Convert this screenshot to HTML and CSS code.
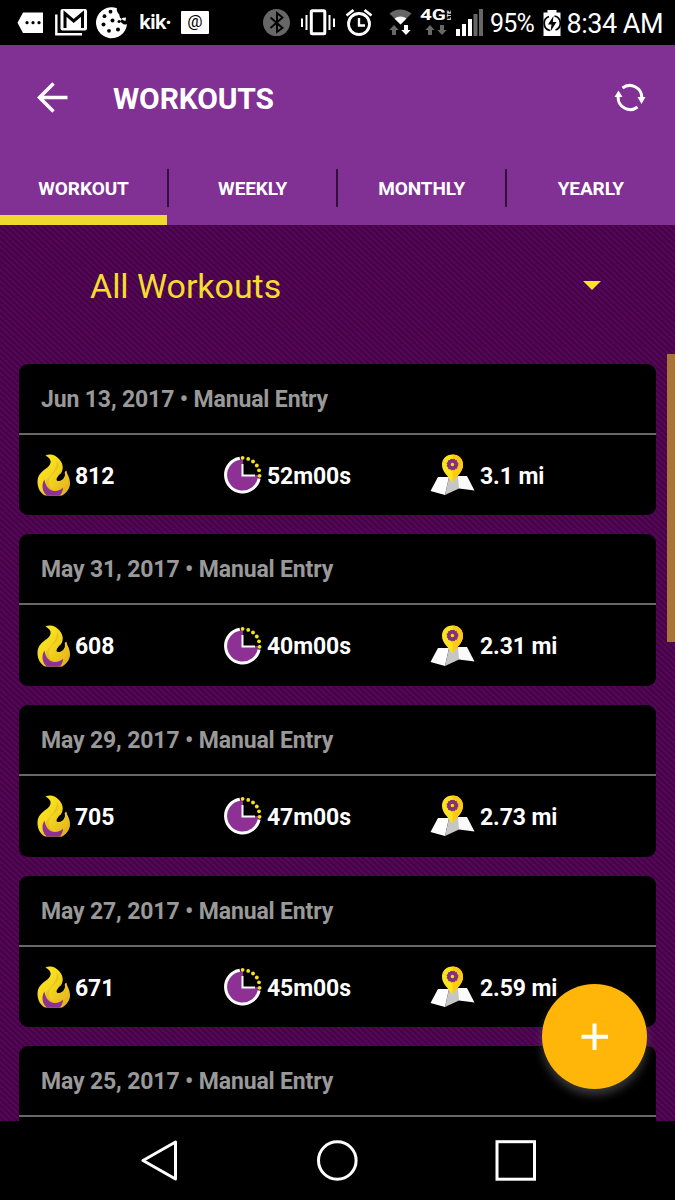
FILE: index.html
```html
<!DOCTYPE html>
<html lang="en">
<head>
    <meta charset="UTF-8">
    <meta name="viewport" content="width=device-width, initial-scale=1.0">
    <title>Workouts</title>
    <link rel="stylesheet" href="styles.css">
</head>
<body>
    <!-- shared icons -->
    <svg class="symbols" width="0" height="0">
        <defs>
            <linearGradient id="flameFill" x1="0" y1="0" x2="1" y2="1">
                <stop offset="0" stop-color="#fff01c"/>
                <stop offset="0.5" stop-color="#f3d420"/>
                <stop offset="1" stop-color="#e2ad1c"/>
            </linearGradient>
        </defs>
        <symbol id="flame" viewBox="0 0 34 42">
            <path d="M8.500 1.500C13 -1 19 1 22.500 5.500C27 11 26.500 16 23 20.500C20.500 23.500 19 25.500 20.500 26.500C24 27.500 28.500 24.500 27.500 19C27.500 18 28.500 17 29.500 16.500C29.500 20 33 23 33 29C33 35 29 39 25 41.500H8C3 39 .5 33.500 .5 28C.5 21 4.500 18 9 14.500C15 10 15.500 5 8.500 1.500Z" fill="url(#flameFill)"/>
            <path d="M20 7C23.500 12 20.500 16 15.500 20C10 25 11 33 16 36C21 38 29 36 32.500 27C33.500 34 29 39.500 25 41.500H12L7.500 30C10 23 20 18 20 7Z" fill="#e3b41c" opacity=".6"/>
            <path d="M22.500 20.500C20 23.500 18.500 26 20.500 26.800C24.500 27.500 28.500 24 27.800 18.500C25.500 18.500 24 20 22.500 20.500Z" fill="#000"/>
            <path d="M7.500 25.500C8 31 11.500 36 16 36.800C20 37.500 24 36 26 33.500C26 37 24.500 40 22.500 41.600H10C6.500 39 5.500 35 5.500 32C5.500 29 6.500 27 7.500 25.500Z" fill="#8d3294"/>
        </symbol>
        <symbol id="clock" viewBox="0 0 38 40">
            <circle cx="18.500" cy="20" r="16" fill="#8d3294"/>
            <path d="M19 20V1H38V20Z" fill="#000"/>
            <path d="M15.800 3.200A17 17 0 1 0 35.200 23.500" fill="none" stroke="#fff" stroke-width="3"/>
            <path d="M18.500 9V20.500H31" fill="none" stroke="#fff" stroke-width="2"/>
            <g fill="#f8e323">
                <circle cx="18.600" cy="2.800" r="1.900"/>
                <circle cx="24.200" cy="3.900" r="1.900"/>
                <circle cx="29" cy="6.500" r="1.900"/>
                <circle cx="32.800" cy="10.500" r="1.900"/>
                <circle cx="35" cy="15.300" r="1.900"/>
                <circle cx="35.600" cy="20.800" r="1.900"/>
            </g>
        </symbol>
        <symbol id="map" viewBox="0 0 46 42">
            <path d="M8 23H19L15 41L.5 37Z" fill="#fff"/>
            <path d="M19 23L29 22V34.500L15 41Z" fill="#c6c6c6"/>
            <path d="M28 22H37L44.500 36.500L29 34.500Z" fill="#fafafa"/>
            <path d="M22.500 .5C16 .5 12 5 12 11C12 18 18.500 22 22.500 28.500C26.500 22 33 18 33 11C33 5 29 .5 22.500 .5Z" fill="#fbe41f"/>
            <path d="M22.500 .5C29 .5 33 5 33 11C33 18 26.500 22 22.500 28.500Z" fill="#fbc916"/>
            <circle cx="22.500" cy="10.500" r="3.600" fill="none" stroke="#85307e" stroke-width="3.600"/>
            <circle cx="22.500" cy="10.500" r="5.300" fill="none" stroke="#85307e" stroke-width="1.200" stroke-dasharray="1.600 1.170"/>
        </symbol>
    </svg>

    <div class="status-bar">
        <div class="notifications">
            <svg width="26" height="45" viewBox="17 0 26 45">
                <path d="M23 12.500H43V33H23L17.500 22.700Z" fill="#fff"/>
                <circle cx="27" cy="22.700" r="1.600"/><circle cx="33" cy="22.700" r="1.600"/><circle cx="39" cy="22.700" r="1.600"/>
            </svg>
            <svg width="32" height="45" viewBox="55 0 32 45">
                <path d="M56.300 14.500V34.300H82" fill="none" stroke="#fff" stroke-width="2.400"/>
                <rect x="60.500" y="9" width="26.500" height="21.500" rx="2" fill="#fff"/>
                <path d="M65 28V13.500L73.700 21L82.500 13.500V28" fill="none" stroke="#000" stroke-width="3"/>
            </svg>
            <svg width="32" height="45" viewBox="96 0 32 45">
                <path d="M117 8.200A15.500 15.500 0 1 0 127 24Q124 25.500 122 23L120 21.500L122 19Q119 18 119.500 15Q116 12 117 8.200Z" fill="#fff"/>
                <path d="M122 18L126 17.500L125.500 21L122.500 20Z" fill="#fff"/>
                <g fill="#000"><circle cx="110.500" cy="11.700" r="1.900"/><circle cx="104.500" cy="16.200" r="1.900"/><circle cx="112.500" cy="20.500" r="2"/><circle cx="103.500" cy="24.500" r="2"/><circle cx="109" cy="30.800" r="1.900"/><circle cx="118" cy="29.600" r="2"/><circle cx="119" cy="21.500" r="1.500"/></g>
            </svg>
            <span class="kik">kik·</span>
            <span class="at">@</span>
        </div>
        <div class="system">
            <svg width="28" height="45" viewBox="263 0 28 45">
                <circle cx="276.500" cy="22.600" r="13.500" fill="#676767"/>
                <path d="M270.500 17.500L282.500 28L277 32V13L282.500 17.500L270.500 28" fill="none" stroke="#000" stroke-width="1.900"/>
            </svg>
            <svg class="vibrate" width="34" height="45" viewBox="301 0 34 45">
                <rect x="311.300" y="10.800" width="13.500" height="23" rx="1" fill="none" stroke="#fff" stroke-width="3"/>
                <path d="M306.500 15V30M329.500 15V30M302 18.500V27M334 18.500V27" stroke="#fff" stroke-width="2"/>
            </svg>
            <svg class="alarm" width="28" height="45" viewBox="345 0 28 45">
                <circle cx="359" cy="24" r="10.500" fill="none" stroke="#fff" stroke-width="2.800"/>
                <path d="M359 18V25.500H365" fill="none" stroke="#fff" stroke-width="2.400"/>
                <path d="M346.500 15.500L353.500 10M371.500 15.500L364.500 10" stroke="#fff" stroke-width="2.800"/>
            </svg>
            <svg class="wifi" width="24" height="45" viewBox="389 0 24 45">
                <path d="M389.500 13.500Q400 5.500 411.500 13.500L400.500 24.500Z" fill="#676767"/>
                <path d="M394.500 18.500Q400.500 14.500 406.500 18.500L400.500 24.500Z" fill="#fff"/>
                <path d="M394 25L398.700 30H396V35H392V30H389.300Z" fill="#676767"/>
                <path d="M406 35L401.300 30H404V25H408V30H410.700Z" fill="#fff"/>
            </svg>
            <svg class="lte" width="31" height="45" viewBox="420 0 31 45">
                <text x="420" y="20" class="fourg" textLength="26" lengthAdjust="spacingAndGlyphs">4G</text>
                <text class="tiny" transform="translate(451 20) rotate(-90)">LTE</text>
                <path d="M430 25L434.700 30H432V35H428V30H425.300ZM442 35L437.300 30H440V25H444V30H446.700Z" fill="#676767"/>
            </svg>
            <svg class="signal" width="28" height="45" viewBox="456 0 28 45">
                <path d="M456 29H460V36H456ZM462 24H466V36H462ZM468 19H472V36H468Z" fill="#fff"/>
                <path d="M473.500 14H477.500V36H473.500ZM479 9H483V36H479Z" fill="#676767"/>
            </svg>
            <span class="percent">95%</span>
            <svg class="battery" width="18" height="45" viewBox="543 0 18 45">
                <path d="M543.500 12.500H547.500V10H556.500V12.500H560.500V36H543.500Z" fill="#fff"/>
                <path d="M550 30.500A7.300 7.300 0 0 1 549 16.500M554.500 16A7.300 7.300 0 0 1 555.500 30" fill="none" stroke="#000" stroke-width="1.700"/>
                <path d="M553.500 16L548 24.500H551.500L550.500 31.500L556.500 22H552.800Z" fill="#000"/>
            </svg>
            <span class="time">8:34 AM</span>
        </div>
    </div>

    <div class="header">
        <div class="title-row">
            <svg class="back" width="32" height="32" viewBox="0 0 32 32"><path d="M16.500 1.500L2.500 15.500L16.500 29.500M2.500 15.500H30.500" fill="none" stroke="#fff" stroke-width="3.500"/></svg>
            <h1>WORKOUTS</h1>
            <svg class="refresh" width="32" height="30" viewBox="0 0 32 30">
                <path d="M8.500 5A12 12 0 0 1 27.800 14.500M23.500 24A12 12 0 0 1 4.200 13.500" fill="none" stroke="#fff" stroke-width="3"/>
                <path d="M23.500 14H31.500L27.500 21ZM.5 14H8.500L4.500 7.500Z" fill="#fff"/>
            </svg>
        </div>
        <div class="tabs">
            <a class="tab active">WORKOUT</a>
            <a class="tab">WEEKLY</a>
            <a class="tab">MONTHLY</a>
            <a class="tab">YEARLY</a>
        </div>
    </div>

    <div class="content">
        <div class="filter">
            <span>All Workouts</span>
            <i class="arrow"></i>
        </div>
        <div class="card">
            <div class="date">Jun 13, 2017 • Manual Entry</div>
            <div class="stats">
                <div class="stat"><svg class="flame"><use href="#flame"/></svg><span>812</span></div>
                <div class="stat"><svg class="clock"><use href="#clock"/></svg><span>52m00s</span></div>
                <div class="stat"><svg class="map"><use href="#map"/></svg><span>3.1 mi</span></div>
            </div>
        </div>
        <div class="card">
            <div class="date">May 31, 2017 • Manual Entry</div>
            <div class="stats">
                <div class="stat"><svg class="flame"><use href="#flame"/></svg><span>608</span></div>
                <div class="stat"><svg class="clock"><use href="#clock"/></svg><span>40m00s</span></div>
                <div class="stat"><svg class="map"><use href="#map"/></svg><span>2.31 mi</span></div>
            </div>
        </div>
        <div class="card">
            <div class="date">May 29, 2017 • Manual Entry</div>
            <div class="stats">
                <div class="stat"><svg class="flame"><use href="#flame"/></svg><span>705</span></div>
                <div class="stat"><svg class="clock"><use href="#clock"/></svg><span>47m00s</span></div>
                <div class="stat"><svg class="map"><use href="#map"/></svg><span>2.73 mi</span></div>
            </div>
        </div>
        <div class="card">
            <div class="date">May 27, 2017 • Manual Entry</div>
            <div class="stats">
                <div class="stat"><svg class="flame"><use href="#flame"/></svg><span>671</span></div>
                <div class="stat"><svg class="clock"><use href="#clock"/></svg><span>45m00s</span></div>
                <div class="stat"><svg class="map"><use href="#map"/></svg><span>2.59 mi</span></div>
            </div>
        </div>
        <div class="card">
            <div class="date">May 25, 2017 • Manual Entry</div>
            <div class="stats"></div>
        </div>
        <div class="scrollbar"></div>
        <div class="add">
            <svg width="28" height="28" viewBox="0 0 28 28"><path d="M13.500 .5V27M.5 13.800H27" stroke="#fff" stroke-width="4"/></svg>
        </div>
    </div>

    <div class="nav-bar">
        <svg width="38" height="42" viewBox="0 0 38 42"><path d="M35.500 2V39L3 20.500Z" fill="none" stroke="#fff" stroke-width="3" stroke-linejoin="round"/></svg>
        <svg width="42" height="42" viewBox="0 0 42 42"><circle cx="21.300" cy="20.500" r="18.800" fill="none" stroke="#fff" stroke-width="3"/></svg>
        <svg width="42" height="42" viewBox="0 0 42 42"><rect x="2" y="1.700" width="37.500" height="37.500" fill="none" stroke="#fff" stroke-width="3"/></svg>
    </div>
</body>
</html>
```
FILE: styles.css
```css
* {
    margin: 0;
    padding: 0;
    box-sizing: border-box;
}
body {
    width: 675px;
    height: 1200px;
    overflow: hidden;
    background-color: #000;
    color: #fff;
    font-family: Roboto, "Liberation Sans", sans-serif;
    display: flex;
    flex-direction: column;
}
svg {
    display: block;
    flex: none;
}
.symbols {
    position: absolute;
}
/* status bar */
.status-bar {
    height: 45px;
    flex: none;
    display: flex;
    justify-content: space-between;
    padding: 0 12px 0 17px;
}
.notifications,
.system {
    display: flex;
    align-items: center;
}
.notifications svg + svg {
    margin-left: 12px;
}
.notifications svg:nth-child(3) {
    margin-left: 9px;
}
.kik {
    width: 32px;
    margin-left: 11px;
    font: bold 19px/45px "Open Sans", sans-serif;
    letter-spacing: -0.9px;
    white-space: nowrap;
}
.at {
    width: 28px;
    height: 23px;
    margin-left: 10px;
    border-radius: 1px;
    background-color: #fff;
    color: #000;
    font-size: 17px;
    line-height: 21px;
    text-align: center;
}
.system {
    width: 400px;
}
.vibrate {
    margin-left: 10px;
}
.alarm {
    margin-left: 10px;
}
.wifi {
    margin-left: 16px;
}
.lte {
    margin-left: 7px;
}
.fourg {
    font-size: 15px;
    font-weight: bold;
    fill: #fff;
}
.tiny {
    font-size: 6px;
    font-weight: bold;
    fill: #fff;
}
.signal {
    margin-left: 5px;
}
.percent {
    width: 52px;
    padding: 2px 0 0 6px;
    font-size: 25px;
    letter-spacing: -0.8px;
}
.battery {
    margin-left: 8px;
}
.time {
    margin-left: 6px;
    padding-top: 2px;
    font-size: 27px;
    letter-spacing: -0.5px;
    white-space: nowrap;
}
/* header */
.header {
    height: 180px;
    flex: none;
    background-color: #813094;
}
.title-row {
    height: 106px;
    display: flex;
    align-items: center;
    padding: 0 29px 0 37px;
}
h1 {
    flex: 1;
    margin-left: 44px;
    font-size: 30px;
    font-weight: bold;
    line-height: 36px;
    padding-top: 2px;
    letter-spacing: -0.15px;
}
.tabs {
    height: 74px;
    display: grid;
    grid-template-columns: repeat(4, 169.1px);
}
.tab {
    position: relative;
    padding-right: 2px;
    text-align: center;
    font-size: 19px;
    font-weight: bold;
    line-height: 76px;
    letter-spacing: -0.1px;
}
.tab + .tab::before {
    content: "";
    position: absolute;
    left: -2px;
    top: 18px;
    width: 2px;
    height: 38px;
    background-color: #32103b;
}
.active::after {
    content: "";
    position: absolute;
    left: 0;
    top: 64px;
    width: 167px;
    height: 10px;
    background-color: #f0d92f;
}
/* workout list */
.content {
    position: relative;
    height: 896px;
    flex: none;
    overflow: hidden;
    padding: 0 19px;
    background: repeating-linear-gradient(43deg, #540556 0, #540556 2.2px, #3a033c 3.2px, #3a033c 3.6px, #540556 4.2px);
}
.filter {
    height: 138.6px;
    display: flex;
    justify-content: space-between;
    align-items: center;
    padding: 0 55px 17px 71px;
    color: #f5dd2b;
    font-size: 34px;
    letter-spacing: -0.05px;
}
.arrow {
    border: 9px solid transparent;
    border-top: 9px solid #fbe02d;
    border-bottom: 0;
}
.card {
    height: 151.7px;
    width: 637px;
    margin-bottom: 19px;
    border-radius: 9px;
    background-color: #000;
}
.date {
    height: 71px;
    padding-left: 22px;
    border-bottom: 2px solid #686868;
    color: #999;
    font-size: 23px;
    font-weight: bold;
    line-height: 72px;
    letter-spacing: -0.14px;
}
.stats {
    height: 81px;
    display: grid;
    grid-template-columns: 187px 206px 1fr;
    padding-left: 18px;
}
.stat {
    display: flex;
    align-items: center;
    font-size: 23px;
    font-weight: bold;
    letter-spacing: -0.1px;
}
.stat span {
    padding-top: 2px;
}
.flame {
    width: 34px;
    height: 42px;
    margin-right: 4px;
}
.clock {
    width: 38px;
    height: 40px;
    margin-right: 5px;
}
.map {
    width: 46px;
    height: 42px;
    margin-right: 4px;
}
.scrollbar {
    position: absolute;
    right: 0;
    top: 129px;
    width: 8px;
    height: 288px;
    background-color: #a97438;
}
.add {
    position: absolute;
    left: 542px;
    top: 759px;
    width: 105px;
    height: 105px;
    border-radius: 50%;
    background-color: #ffb608;
    box-shadow: 0 6px 10px rgba(80, 80, 80, 0.7);
    display: flex;
    align-items: center;
    justify-content: center;
}
/* android navigation */
.nav-bar {
    height: 79px;
    display: flex;
    align-items: center;
    justify-content: space-between;
    padding: 0 138px 0 140px;
}
```
